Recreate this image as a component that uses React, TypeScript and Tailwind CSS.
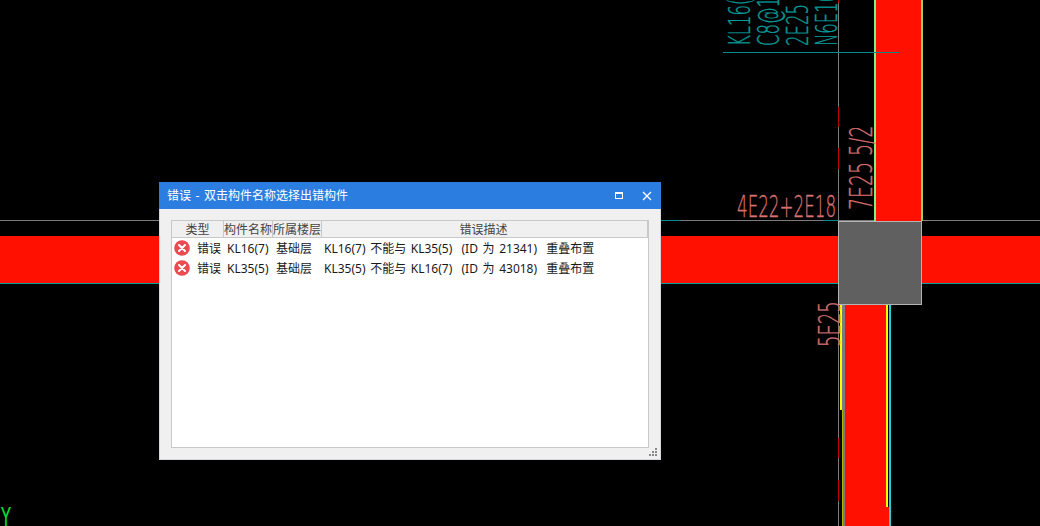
const rows = [
  { name: "KL16(7)", desc: "KL16(7) 不能与 KL35(5)  (ID 为 21341)  重叠布置" },
  { name: "KL35(5)", desc: "KL35(5) 不能与 KL16(7)  (ID 为 43018)  重叠布置" },
];

function ErrorIcon() {
  return (
    <svg width="16" height="16" viewBox="0 0 16 16" className="mb-[2px] shrink-0">
      <circle cx="8" cy="8" r="7.8" fill="#ea4a50" />
      <path d="M5 5l6 6M11 5l-6 6" stroke="#fff" strokeWidth="2" strokeLinecap="round" />
    </svg>
  );
}

function ErrorDialog() {
  return (
    <div className="absolute left-[159px] top-[182px] flex h-[278px] w-[502px] flex-col bg-[#f0f0f0] font-['Noto_Sans','Noto_Sans_CJK_SC',sans-serif] text-xs text-[#1a1a1a]">
      <div className="flex h-[27px] shrink-0 items-center justify-between bg-[#2b7de0] pl-2 pr-[9px] text-white">
        <span className="pt-px [word-spacing:1.5px]">错误 - 双击构件名称选择出错构件</span>
        <div className="flex items-center gap-[19px]">
          <div className="h-[7px] w-[8px] border border-t-2 border-white" />
          <svg width="10" height="10" viewBox="0 0 10 10">
            <path d="M1 1l8 8M9 1l-8 8" stroke="#fff" strokeWidth="1.3" />
          </svg>
        </div>
      </div>
      <div className="relative flex-1 border-x border-b border-[#d4d6dc] px-[11px] pb-[11px] pt-[11px]">
        <div className="h-full border border-[#c8c8c8] bg-white">
          <div className="grid h-[17px] grid-cols-[52px_49px_49px_1fr] border-b border-[#c8c8c8] bg-[#f0f0f0] leading-[17px] text-[#444]">
            <div className="border-r border-[#c8c8c8] text-center">类型</div>
            <div className="whitespace-nowrap border-r border-[#c8c8c8] text-center">构件名称</div>
            <div className="whitespace-nowrap border-r border-[#c8c8c8] text-center">所属楼层</div>
            <div className="border-r border-[#c8c8c8] pr-[2px] text-center">错误描述</div>
          </div>
          <div className="flex flex-col pt-px">
            {rows.map((r) => (
              <div key={r.name} className="flex h-5 items-center whitespace-pre pl-[2px]">
                <ErrorIcon />
                <span className="ml-[7px] w-[30px]">错误</span>
                <span className="w-[49px]">{r.name}</span>
                <span className="w-[48px]">基础层</span>
                <span className="[word-spacing:1.5px]">{r.desc}</span>
              </div>
            ))}
          </div>
        </div>
        <div className="absolute bottom-[3px] right-[3px] grid grid-cols-3 gap-px">
          <i /><i /><i className="h-[2px] w-[2px] bg-[#8a8a8a]" />
          <i /><i className="h-[2px] w-[2px] bg-[#8a8a8a]" /><i className="h-[2px] w-[2px] bg-[#8a8a8a]" />
          <i className="h-[2px] w-[2px] bg-[#8a8a8a]" /><i className="h-[2px] w-[2px] bg-[#8a8a8a]" /><i className="h-[2px] w-[2px] bg-[#8a8a8a]" />
        </div>
      </div>
    </div>
  );
}

// the CAD plan behind the dialog
function Drawing() {
  const red = "#ff1000";
  const grey = "#7c7c7c";
  const teal = "#0a8a8a";
  const pink = "#d87070";
  const labelFont = "'DejaVu Sans', sans-serif";
  return (
    <svg width="1040" height="526" viewBox="0 0 1040 526" className="block" shapeRendering="crispEdges">
      {/* horizontal beam */}
      <rect x="0" y="236" width="1040" height="47" fill={red} />
      <rect x="0" y="220" width="823" height="1" fill={grey} />
      <rect x="661" y="220" width="20" height="1" fill={teal} />
      <rect x="823" y="220" width="15" height="1" fill={teal} />
      <rect x="838" y="220" width="202" height="1" fill={grey} />
      <rect x="0" y="283" width="1040" height="1" fill="#0aa0a0" />

      {/* upper vertical beam */}
      <rect x="876" y="0" width="45" height="221" fill={red} />
      <rect x="874" y="0" width="2" height="221" fill="#80f080" />
      <rect x="921" y="0" width="2" height="221" fill="#a0d060" />

      {/* lower vertical beam */}
      <rect x="845" y="304" width="41" height="222" fill={red} />
      <rect x="886" y="507" width="3" height="19" fill={red} />
      <rect x="842" y="304" width="3" height="222" fill={grey} />
      <rect x="840" y="304" width="2" height="106" fill="#ffff00" />
      <rect x="842" y="410" width="1" height="116" fill="#b0b000" />
      <rect x="886" y="304" width="2" height="203" fill="#ffff00" />
      <rect x="889" y="304" width="2" height="222" fill="#20d0d0" />

      {/* axis */}
      <rect x="838" y="0" width="1" height="526" fill={grey} />
      <rect x="838" y="0" width="1" height="3" fill="#c00000" />
      <rect x="838" y="107" width="1" height="20" fill="#c00000" />
      <rect x="838" y="148" width="1" height="21" fill="#c00000" />
      <rect x="838" y="438" width="1" height="20" fill="#c00000" />
      <rect x="838" y="480" width="1" height="21" fill="#c00000" />

      {/* column */}
      <rect x="838.5" y="221.5" width="83" height="83" fill="#606060" stroke="#b4b4b4" />

      <rect x="723" y="52" width="176" height="1" fill={teal} />

      <g fontFamily={labelFont} fontWeight="200" shapeRendering="auto" strokeWidth="0.35">
        <g fontSize="30" fill="#0a9a9a" stroke="#0a9a9a">
          <text transform="translate(750 46) rotate(-90) scale(0.55 1)">KL16(7)</text>
          <text transform="translate(779 46) rotate(-90) scale(0.55 1)">C8@100</text>
          <text transform="translate(808 46) rotate(-90) scale(0.55 1)">2E25</text>
          <text transform="translate(837 46) rotate(-90) scale(0.55 1)">N6E16</text>
        </g>
        <g fill={pink} stroke={pink}>
          <text fontSize="30" transform="translate(737 217) scale(0.558 1)">4E22+2E18</text>
          <text fontSize="31.5" transform="translate(871.5 210) rotate(-90) scale(0.6 1)">7E25 5/2</text>
          <text fontSize="31" transform="translate(840 347) rotate(-90) scale(0.58 1)">5E25</text>
        </g>
        <text fontSize="26" fontWeight="400" fill="#00e030" transform="translate(1 527) scale(0.62 1)">Y</text>
      </g>
    </svg>
  );
}

export default function App() {
  return (
    <div className="relative h-[526px] w-[1040px] overflow-hidden bg-black">
      <Drawing />
      <ErrorDialog />
    </div>
  );
}
